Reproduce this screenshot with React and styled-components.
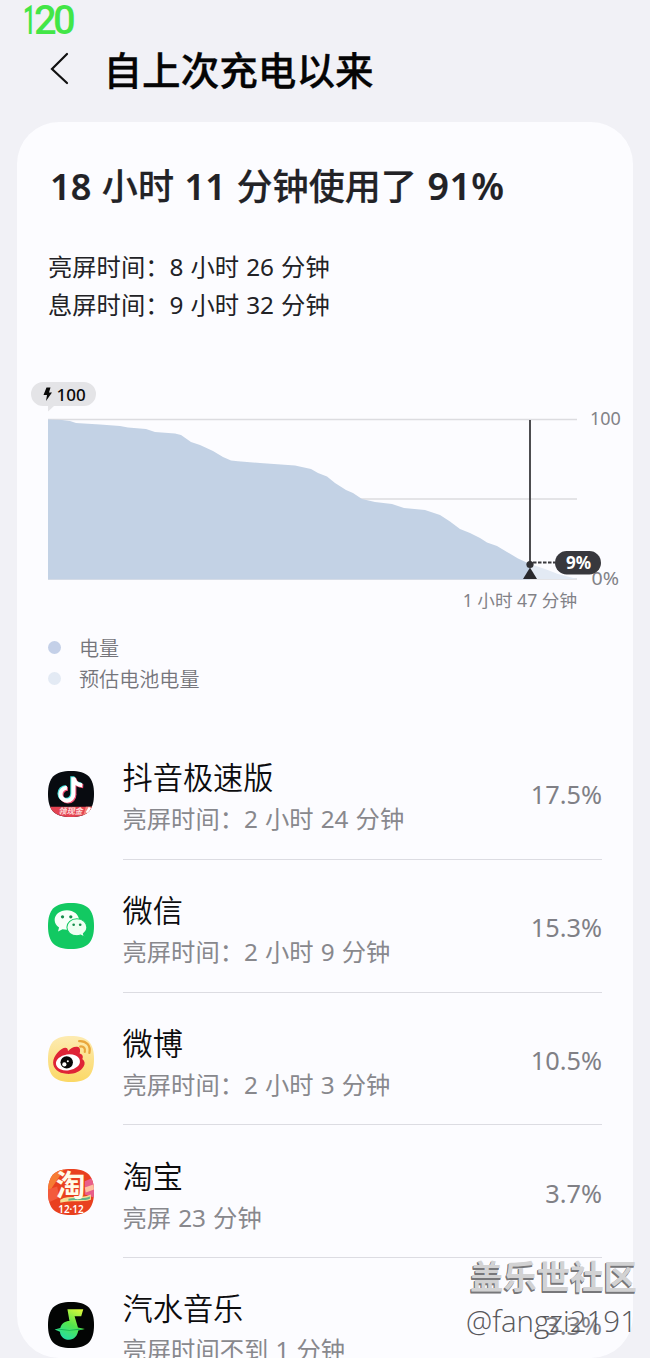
import React from 'react';
import styled, { createGlobalStyle } from 'styled-components';

const GlobalStyle = createGlobalStyle`
  * {
    box-sizing: border-box;
  }
  body {
    margin: 0;
    background: #f1f1f6;
    font-family: 'Noto Sans', 'Noto Sans CJK SC', sans-serif;
  }
`;

const Screen = styled.div`
  position: relative;
  width: 650px;
  height: 1358px;
  overflow: hidden;
  display: flex;
  flex-direction: column;
  color: #222226;
`;

const FrameRate = styled.svg`
  display: block;
  flex: none;
  width: 80px;
  height: 38px;
  overflow: visible;
`;

const Header = styled.header`
  display: flex;
  align-items: center;
  flex: none;
  height: 84px;
  padding: 0 0 20px 49px;
`;

const BackIcon = styled.svg`
  width: 20px;
  height: 34px;
  margin-top: -4px;
`;

const PageTitle = styled.h1`
  margin: 0 0 0 34.5px;
  font-size: 38.6px;
  line-height: 56px;
  font-weight: 500;
  color: #050505;
  -webkit-text-stroke: 0.3px #050505;
`;

const Card = styled.main`
  flex: none;
  height: 1236px;
  margin: 0 17px;
  overflow: hidden;
  border-radius: 42px;
  background: #fcfcff;
`;

const Summary = styled.h2`
  margin: 37px 0 0 33px;
  font-size: 36.1px;
  line-height: 54px;
  font-weight: 500;
  white-space: nowrap;
  word-spacing: 1.2px;
  -webkit-text-stroke: 0.2px #222226;
`;

const Figure = styled.span`
  font-weight: 600;
  font-size: ${({ $wide }) => ($wide ? '37.5px' : 'inherit')};
  letter-spacing: ${({ $wide }) => ($wide ? '0.5px' : 0)};
`;

const Times = styled.div`
  margin: 35px 0 0 31px;
  font-size: 24.3px;
  line-height: 38px;
  word-spacing: 0.8px;
`;

const ChartSvg = styled.svg`
  display: block;
  width: 616px;
  height: 244px;
  margin-top: 48px;
`;

const Legend = styled.ul`
  list-style: none;
  margin: 17px 0 0;
  padding: 0 0 0 31px;
`;

const LegendItem = styled.li`
  display: flex;
  align-items: center;
  height: 31px;
  gap: 18px;
  font-size: 20.1px;
  line-height: 31px;
  font-weight: 350;
  color: #75757b;

  &::before {
    content: '';
    width: 13px;
    height: 13px;
    margin-top: -2px;
    border-radius: 50%;
    background: ${({ $color }) => $color};
  }
`;

const AppList = styled.section`
  padding: 32px 31px 0;
`;

const AppRow = styled.article`
  display: flex;
  height: 132.8px;
`;

const AppIcon = styled.svg`
  flex: none;
  width: 46px;
  height: 46px;
  margin: 43.5px 28.5px 0 0;
  overflow: visible;
`;

const AppBody = styled.div`
  display: flex;
  flex: 1;
  justify-content: space-between;
  padding-top: 30.2px;
  border-bottom: 1.5px solid #dcdce2;
`;

const AppName = styled.div`
  font-size: 30.2px;
  line-height: 42px;
  font-weight: 350;
  color: #0c0c0e;
`;

const AppTime = styled.div`
  font-size: 24.3px;
  line-height: 40px;
  word-spacing: 0.8px;
  color: #88888d;
`;

const AppPercent = styled.div`
  margin-top: 17px;
  font-size: 25.3px;
  line-height: 40px;
  color: #808086;
`;

const Watermark = styled.div`
  position: absolute;
  right: 13px;
  bottom: 15px;
  text-align: right;
  white-space: nowrap;
`;

const Community = styled.div`
  font-size: 33.4px;
  line-height: 46px;
  font-weight: 700;
  color: #d2d2d3;
  text-shadow: -1px 1px 0 #77777a, -1px 2px 0 #77777a;
`;

const UserHandle = styled.div`
  font-family: 'Open Sans', 'Noto Sans', sans-serif;
  font-weight: 300;
  font-size: 29.5px;
  line-height: 44px;
  color: #58585c;
`;

const squircle = 'M22.5 0C38.5 0 45 6.500 45 22.500S38.500 45 22.500 45S0 38.500 0 22.500S6.500 0 22.500 0Z';

function DouyinIcon() {
  const note = 'M24.800 6V22.500A6.300 6.300 0 1 1 18.500 16.400M24.800 6.500C26 11.500 29 13.700 33.500 14';
  return (
    <AppIcon viewBox="0 0 45 45">
      <clipPath id="dy"><path d={squircle} /></clipPath>
      <g clipPath="url(#dy)">
        <rect width="45" height="45" fill="#080b10" />
        <g fill="none" strokeWidth="4">
          <path d={note} stroke="#43ded9" transform="translate(-1 -.8)" />
          <path d={note} stroke="#f15174" transform="translate(1 .9)" />
          <path d={note} stroke="#fff" />
        </g>
        <path d="M0 35H45V45H0Z" fill="#e34352" />
        <path d="M37 35H45V41L38 45L34 45Z" fill="#f4867f" />
        <path d="M40 35L37 40L39 42L42 37Z" fill="#fff" />
        <text x="10" y="42.500" fontSize="8" fontWeight="700" fontStyle="italic" fill="#ffdede">领现金</text>
      </g>
    </AppIcon>
  );
}

function WechatIcon() {
  return (
    <AppIcon viewBox="0 0 45 45">
      <path d={squircle} fill="#12c962" />
      <path d="M18.500 7C11.500 7 6.500 11.200 6.500 16.600C6.500 19.700 8.200 22.300 10.800 24L9.800 28L14.200 25.700C15.500 26 17 26.200 18.500 26.200C25 26.200 30.300 22 30.300 16.600S25 7 18.500 7Z" fill="#f8fff9" />
      <path d="M28.300 15.500C22.500 15.500 18.500 19.200 18.500 23.800S22.500 32 28.300 32C29.600 32 30.800 31.800 31.900 31.400L35.500 33.300L34.600 29.900C36.800 28.300 38 26.200 38 23.800C38 19.200 34 15.500 28.300 15.500Z" fill="#effff2" stroke="#12c962" />
      <g fill="#168e4c">
        <circle cx="14.200" cy="13.500" r="1.600" />
        <circle cx="22.300" cy="13.500" r="1.600" />
        <circle cx="25.100" cy="21.300" r="1.300" />
        <circle cx="31.500" cy="21.300" r="1.300" />
      </g>
    </AppIcon>
  );
}

function WeiboIcon() {
  return (
    <AppIcon viewBox="0 0 45 45">
      <defs>
        <linearGradient id="wb" x1="0" y1="0" x2="0" y2="1">
          <stop offset="0" stopColor="#fdebb2" />
          <stop offset="1" stopColor="#fbd865" />
        </linearGradient>
      </defs>
      <path d={squircle} fill="url(#wb)" />
      <path d="M5 26C5 19 13 11.500 17 11.500C20 11.500 19.500 15 19.500 15C22 12 26 9.800 29.500 10.800C32.500 12 31 17 31 17C34.500 18 34.500 21 33.500 22.500C36 24 36.500 27 35 29.500C32 35 25 37.500 18 37C10 36.500 5 32 5 26Z" fill="#df2436" />
      <ellipse cx="19.500" cy="25.800" rx="11.800" ry="7.900" fill="#fff" transform="rotate(-8 19.500 25.800)" />
      <circle cx="18.300" cy="25.800" r="6.100" fill="#080808" />
      <circle cx="16" cy="27.800" r="2.100" fill="#fff" />
      <circle cx="19.400" cy="24.800" r="1" fill="#fff" />
      <g fill="none" stroke="#e9a63c" strokeWidth="2.200" strokeLinecap="round">
        <path d="M30.500 5C37.500 4.500 42 9.500 40.500 16.500" />
        <path d="M31.500 10.300C35 10 36.800 12 36 15.500" />
      </g>
    </AppIcon>
  );
}

function TaobaoIcon() {
  return (
    <AppIcon viewBox="0 0 45 45">
      <clipPath id="tb"><path d={squircle} /></clipPath>
      <g clipPath="url(#tb)">
        <rect width="45" height="45" fill="#e9401f" />
        <path d="M0 0H16L4 18L0 25Z" fill="#f67b33" />
        <path d="M36 12L45 8V28L36 25Z" fill="#e85f8b" />
        <path d="M0 20L9 17L11 28L0 33Z" fill="#f35a3c" />
        <path d="M36 18L45 15V20L37 23Z" fill="#ffc0a0" />
        <path d="M12 30C21 25 31 30 42 25V30C32 33 22 30 12 33Z" fill="#f6dc91" />
        <path d="M20 29C28 27 34 30 41 27V29C34 32 26 29 20 31Z" fill="#62b487" />
      </g>
      <text x="7.500" y="26.500" fontSize="29" fontWeight="700" fill="#fffbe8">淘</text>
      <text x="10" y="42.800" fontSize="10.500" fontWeight="600" fill="#fff" textLength="25" lengthAdjust="spacingAndGlyphs">12·12</text>
    </AppIcon>
  );
}

function SodaIcon() {
  return (
    <AppIcon viewBox="0 0 45 45">
      <defs>
        <linearGradient id="soda" x1=".8" y1="0" x2=".3" y2="1">
          <stop offset="0" stopColor="#d6f63b" />
          <stop offset=".5" stopColor="#55e64b" />
          <stop offset="1" stopColor="#22dda8" />
        </linearGradient>
      </defs>
      <path d={squircle} fill="#030504" />
      <path d="M19 7H34.500L32.500 14H26L29.300 25L36 26.500L29.600 28C29 33 25.500 37 20.500 37C15.500 37 12 33.500 11.700 29L6.500 27L12 25.500C13 21 17 18.500 21 18.500Z" fill="url(#soda)" />
      <path d="M8 27L13 26.300L21 27.300L30 26.200L35 26.600L29.500 27.300L21 28.100Z" fill="#14b457" />
    </AppIcon>
  );
}

const apps = [
  { name: '抖音极速版', time: '亮屏时间：2 小时 24 分钟', percent: '17.5%', Icon: DouyinIcon },
  { name: '微信', time: '亮屏时间：2 小时 9 分钟', percent: '15.3%', Icon: WechatIcon },
  { name: '微博', time: '亮屏时间：2 小时 3 分钟', percent: '10.5%', Icon: WeiboIcon },
  { name: '淘宝', time: '亮屏 23 分钟', percent: '3.7%', Icon: TaobaoIcon },
  { name: '汽水音乐', time: '亮屏时间不到 1 分钟', percent: '3.3%', Icon: SodaIcon },
];

// battery level over time, in chart units
const levels = [
  [48, 419.5], [62, 420], [70, 421], [76, 423], [100, 424.500], [120, 426], [128, 427.500], [146, 429],
  [155, 432], [175, 433.500], [181, 435], [191, 442], [200, 445], [213, 451], [223, 457], [231, 460.500],
  [238, 461.200], [260, 463], [295, 465.500], [311, 469], [318, 473], [327, 476.500], [335, 483], [346, 490],
  [353, 493], [362, 499], [375, 502], [392, 504], [404, 508], [425, 510], [440, 515], [450, 521.500],
  [460, 529], [470, 533], [480, 538], [487, 542.500], [497, 546], [507, 552], [518, 558.500], [530, 564],
];

function BatteryChart() {
  const line = levels.map((point) => point.join(' ')).join('L');
  return (
    <ChartSvg viewBox="17 372 616 244">
      <g stroke="#dcdce0" strokeWidth="1.500">
        <path d="M48 419.500H577M48 499H577M48 579H577" />
      </g>
      <path d="M530 564L545 569L558 574L577 579H530Z" fill="#e3eaf4" />
      <path d={`M48 579.500L${line}V579.500Z`} fill="#c3d2e5" />
      <path d="M43 382H84A12 12 0 0 1 84 406H54L48 411.500V406H43A12 12 0 0 1 43 382Z" fill="#e4e4e7" />
      <path d="M46.500 387.500H50.500L49 392.500H52L46 401L47 395H43.500Z" fill="#0a0a0a" />
      <text x="56.500" y="400.500" fontSize="17" fontWeight="500" fill="#0a0a0a">100</text>
      <path d="M530 420V565" stroke="#39393d" strokeWidth="1.800" />
      <circle cx="530" cy="564.500" r="3.600" fill="#303034" />
      <path d="M530 567.500L537 579H523Z" fill="#28282c" />
      <path d="M533 562.500H555" stroke="#39393d" strokeWidth="1.900" strokeDasharray="3.500 1.500" />
      <g fill="#828287">
        <text x="590" y="425" fontSize="18">100</text>
        <text x="591.500" y="584.500" fontSize="18" textLength="27.500" lengthAdjust="spacingAndGlyphs">0%</text>
        <text x="577" y="607" fontSize="17.600" textAnchor="end">1 小时 47 分钟</text>
      </g>
      <rect x="555" y="551" width="46" height="23.500" rx="11.700" fill="#38383d" />
      <text x="578.500" y="569" fontSize="17" fontWeight="700" fill="#fff" textAnchor="middle">9%</text>
    </ChartSvg>
  );
}

export default function App() {
  return (
    <Screen>
      <GlobalStyle />
      <FrameRate viewBox="0 0 80 38">
        <g fontFamily="Roboto, sans-serif" fontSize="40" fontWeight="500" fill="#43e647">
          <text x="23" y="34" textLength="13" lengthAdjust="spacingAndGlyphs">1</text>
          <text x="34 53" y="34">20</text>
        </g>
      </FrameRate>
      <Header>
        <BackIcon viewBox="0 0 20 34" fill="none" stroke="#111" strokeWidth="2.200" strokeLinecap="round">
          <path d="M18 3L3 18L18 32" />
        </BackIcon>
        <PageTitle>自上次充电以来</PageTitle>
      </Header>
      <Card>
        <Summary>
          <Figure>18</Figure> 小时 <Figure>11</Figure> 分钟使用了 <Figure $wide>91%</Figure>
        </Summary>
        <Times>
          <div>亮屏时间：8 小时 26 分钟</div>
          <div>息屏时间：9 小时 32 分钟</div>
        </Times>
        <BatteryChart />
        <Legend>
          <LegendItem $color="#c4d0e8">电量</LegendItem>
          <LegendItem $color="#e3eaf4">预估电池电量</LegendItem>
        </Legend>
        <AppList>
          {apps.map(({ name, time, percent, Icon }) => (
            <AppRow key={name}>
              <Icon />
              <AppBody>
                <div>
                  <AppName>{name}</AppName>
                  <AppTime>{time}</AppTime>
                </div>
                <AppPercent>{percent}</AppPercent>
              </AppBody>
            </AppRow>
          ))}
        </AppList>
      </Card>
      <Watermark>
        <Community>盖乐世社区</Community>
        <UserHandle>@fangzi2191</UserHandle>
      </Watermark>
    </Screen>
  );
}
